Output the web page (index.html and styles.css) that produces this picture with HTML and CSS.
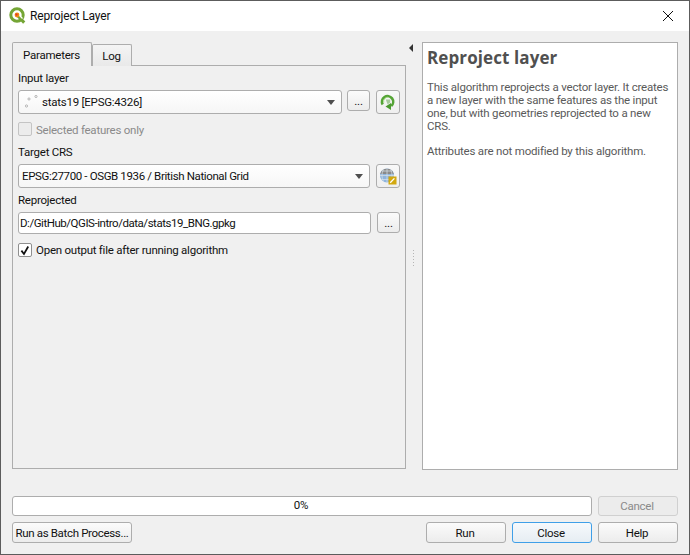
FILE: index.html
```html
<!DOCTYPE html>
<html lang="en">
<head>
<meta charset="utf-8">
<title>Reproject Layer</title>
<link rel="stylesheet" href="styles.css">
</head>
<body>
<div class="window">
  <header class="titlebar">
    <svg class="logo" width="18" height="18" viewBox="0 0 18 18">
      <circle cx="8" cy="8" r="6.2" fill="none" stroke="#74a535" stroke-width="3"/>
      <path d="M9 9l6.2 6.6" stroke="#74a535" stroke-width="3" fill="none"/>
      <path d="M8.5 6.5l5 5" stroke="#fff" stroke-width="1.3" fill="none"/>
      <circle cx="8" cy="8" r="2.4" fill="#f08a12"/>
      <circle cx="7.5" cy="7.6" r="1.1" fill="#e3322b"/>
    </svg>
    <span class="title">Reproject Layer</span>
    <svg class="close-x" width="12" height="12" viewBox="0 0 12 12"><path d="M1 1l10 10M11 1L1 11" stroke="#111" stroke-width="1" fill="none"/></svg>
  </header>
  <div class="body">
    <div class="main">
      <section class="left">
        <div class="tabs">
          <span class="tab active">Parameters</span>
          <span class="tab">Log</span>
        </div>
        <div class="pane">
          <label class="lbl lbl-first">Input layer</label>
          <div class="row row-input">
            <div class="combo combo-layer">
              <svg class="pts" width="16" height="16" viewBox="0 0 16 16">
                <circle cx="2.5" cy="12" r="1.1" fill="#fff" stroke="#9a9a9a" stroke-width=".7"/>
                <circle cx="5" cy="5" r="1.1" fill="#fff" stroke="#9a9a9a" stroke-width=".7"/>
                <circle cx="12" cy="2.5" r="1.1" fill="#fff" stroke="#9a9a9a" stroke-width=".7"/>
              </svg>
              <span class="combo-text">stats19 [EPSG:4326]</span>
              <i class="arrow"></i>
            </div>
            <button class="btn dots dots-short">...</button>
            <button class="btn icon-btn">
              <svg width="18" height="18" viewBox="0 0 18 18">
                <path d="M3.7 11.5A5.6 5.6 0 1 1 12.2 13" fill="none" stroke="#55a436" stroke-width="2.6"/>
                <path d="M4.8 9.6A4.2 4.2 0 0 1 9 4.2" fill="none" stroke="#a4dc82" stroke-width=".9"/>
                <path d="M12 10v7l-5.5-3.5z" fill="#4a9a2e"/>
                <path d="M6.8 6.4h4.4v3.2l-2.6 1.8z" fill="#4a9a2e" opacity=".45"/>
              </svg>
            </button>
          </div>
          <label class="check check-disabled"><i class="box"></i><span>Selected features only</span></label>
          <label class="lbl lbl-crs">Target CRS</label>
          <div class="row row-crs">
            <div class="combo combo-crs">
              <span class="combo-text">EPSG:27700 - OSGB 1936 / British National Grid</span>
              <i class="arrow"></i>
            </div>
            <button class="btn icon-btn">
              <svg width="20" height="20" viewBox="0 0 20 20">
                <circle cx="9" cy="9.5" r="7" fill="#8fb4dc"/>
                <path d="M2.2 8A7 7 0 0 1 15.8 8z" fill="#8a8a8a"/>
                <path d="M9 2.5v14M2 9.5h14M4 5h10M3.5 13.5h11M5.5 3.5c-2 4-2 8 0 12M12.5 3.5c2 4 2 8 0 12" stroke="#d8e2ea" stroke-width=".7" fill="none"/>
                <rect x="10.5" y="10.5" width="8" height="8" fill="#d2a80f"/>
                <path d="M12.2 16.8l4.2-4.4" stroke="#fff" stroke-width="1.3"/>
              </svg>
            </button>
          </div>
          <label class="lbl lbl-out">Reprojected</label>
          <div class="row row-out">
            <div class="edit">D:/GitHub/QGIS-intro/data/stats19_BNG.gpkg</div>
            <button class="btn dots">...</button>
          </div>
          <label class="check check-on">
            <i class="box">
              <svg width="13" height="13" viewBox="0 0 13 13"><path d="M2.6 6.6l2.8 3.6 4.6-8" fill="none" stroke="#111" stroke-width="1.9"/></svg>
            </i>
            <span>Open output file after running algorithm</span>
          </label>
        </div>
      </section>
      <div class="splitter">
        <i class="collapse"></i>
        <span class="grip"><i></i><i></i><i></i><i></i><i></i><i></i></span>
      </div>
      <aside class="help">
        <h1>Reproject layer</h1>
        <p>This algorithm reprojects a vector layer. It creates a new layer with the same features as the input one, but with geometries reprojected to a new CRS.</p>
        <p>Attributes are not modified by this algorithm.</p>
      </aside>
    </div>
    <div class="progress-row">
      <div class="progress">0%</div>
      <button class="btn action cancel" disabled>Cancel</button>
    </div>
    <div class="button-row">
      <button class="btn batch">Run as Batch Process...</button>
      <span class="spacer"></span>
      <button class="btn action">Run</button>
      <button class="btn action focus">Close</button>
      <button class="btn action">Help</button>
    </div>
  </div>
</div>
</body>
</html>
```
FILE: styles.css
```css
* { box-sizing: border-box; }
html, body { margin: 0; padding: 0; }
body { width: 690px; height: 555px; overflow: hidden; font: 11.5px/16px Roboto, sans-serif; color: #111; letter-spacing: -.24px; }
.window { width: 690px; height: 555px; border: 1px solid #5c5c5c; background: #f0f0f0; display: flex; flex-direction: column; }
.titlebar { height: 30px; flex: none; background: #fff; display: flex; align-items: center; padding: 0 15px 0 8px; }
.logo { margin-right: 3px; }
.title { flex: 1; font-size: 12px; letter-spacing: -.15px; }
.body { flex: 1; display: flex; flex-direction: column; padding: 11px 11px 0; }
.main { display: flex; height: 428px; }
.left { width: 394px; flex: none; display: flex; flex-direction: column; height: 427px; }
.tabs { display: flex; height: 24px; flex: none; position: relative; z-index: 1; }
.tab { width: 40px; height: 22px; margin-top: 2px; padding-right: 1px; border: 1px solid #adadad; border-bottom: 0; border-radius: 2px 2px 0 0; background: linear-gradient(#f4f4f4, #e9e9e9); text-align: center; line-height: 22px; }
.tab.active { width: 80px; height: 24px; margin-top: 0; background: #f0f0f0; line-height: 25px; }
.pane { flex: 1; margin-top: -1px; border: 1px solid #adadad; padding: 4px 5px 0; display: flex; flex-direction: column; }
.lbl { display: block; height: 16px; flex: none; }
.row { display: flex; flex: none; }
.row-input { margin-top: 4px; height: 24px; }
.combo { height: 24px; border: 1px solid #adadad; border-radius: 3px; background: linear-gradient(#fff, #f6f6f6); display: flex; align-items: center; padding-left: 3px; position: relative; }
.combo-layer { width: 324px; padding-left: 5px; }
.combo-crs { width: 352px; letter-spacing: -.37px; }
.pts { margin-right: 2px; flex: none; }
.combo-text { flex: 1; white-space: nowrap; }
.arrow { width: 0; height: 0; border: 4px solid transparent; border-top: 5px solid #4f4f4f; border-bottom: 0; margin-right: 6px; }
.btn { font: inherit; letter-spacing: inherit; color: #111; border: 1px solid #adadad; border-radius: 3px; background: linear-gradient(#fbfbfb, #ececec); padding: 0; display: flex; align-items: center; justify-content: center; flex: none; white-space: nowrap; }
.dots { width: 23px; height: 21px; margin-left: 6px; }
.dots-short { width: 23px; margin-left: 5px; }
.icon-btn { width: 24px; height: 24px; margin-left: 6px; background: linear-gradient(#f8f8f8, #efefef); }
.check { display: flex; align-items: center; height: 14px; flex: none; }
.box { width: 14px; height: 14px; border: 1px solid #8f8f8f; background: #fff; border-radius: 2px; margin-right: 4px; display: flex; align-items: center; justify-content: center; flex: none; }
.check-disabled { margin-top: 8px; color: #8a8a8a; }
.check-disabled span { padding-top: 2px; }
.check-disabled .box { background: #ececec; border-color: #c4c4c4; }
.lbl-crs { margin-top: 8px; }
.row-crs { margin-top: 4px; height: 24px; }
.lbl-out { margin-top: 4px; }
.row-out { margin-top: 4px; height: 22px; }
.edit { width: 353px; height: 22px; border: 1px solid #adadad; border-radius: 3px; background: #fff; line-height: 20px; padding-left: 1px; white-space: nowrap; letter-spacing: -.46px; }
.check-on { margin-top: 9px; }
.splitter { width: 16px; flex: none; position: relative; }
.collapse { position: absolute; left: 3px; top: 2px; width: 0; height: 0; border: 4px solid transparent; border-right: 4px solid #333; border-left: 0; }
.grip { position: absolute; left: 7px; top: 208px; display: flex; flex-direction: column; gap: 2px; }
.grip i { width: 1px; height: 1px; background: #b5b5b5; display: block; }
.help { width: 256px; flex: none; height: 428px; border: 1px solid #adadad; background: #fff; padding: 3px 4px; color: #5a5a5a; line-height: 13px; }
.help h1 { font: 700 17px/24px "Open Sans", sans-serif; margin: 0 0 11px; color: #505050; letter-spacing: .1px; }
.help p { margin: 0 0 12px; font-size: 11.5px; letter-spacing: -.2px; }
.progress-row { display: flex; justify-content: space-between; margin-top: 26px; height: 20px; flex: none; }
.progress { width: 580px; height: 20px; border: 1px solid #adadad; border-radius: 3px; background: #fff; text-align: center; line-height: 17px; padding-right: 2px; }
.action { width: 80px; height: 21px; padding-right: 2px; }
.action:disabled { color: #8a8a8a; border-color: #d0d0d0; background: #ececec; height: 20px; }
.cancel { padding-bottom: 1px; }
.button-row { display: flex; gap: 6px; margin-top: 6px; height: 21px; flex: none; }
.batch { width: 120px; letter-spacing: -.33px; }
.spacer { flex: 1; }
.focus { border-color: #3f9fe8; background: linear-gradient(#f6f9fc, #e6edf3); }
```
